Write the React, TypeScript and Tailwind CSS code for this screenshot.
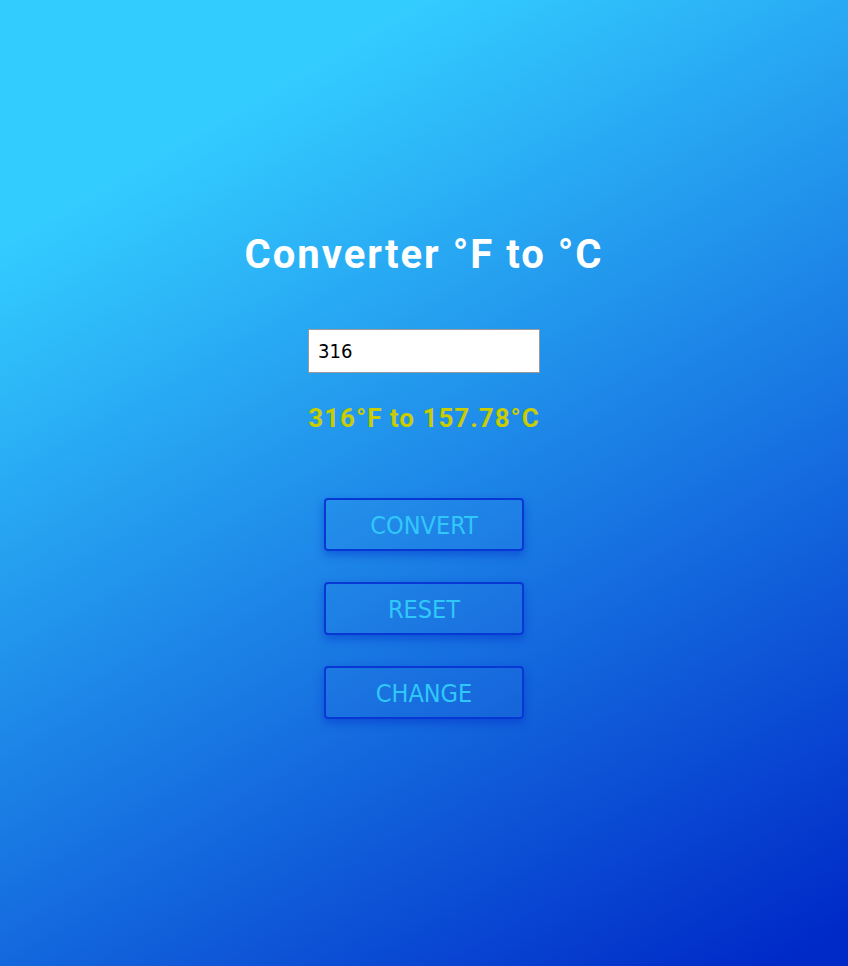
import { useState } from 'react';

const toCelsius = (f: number) => ((f - 32) * 5) / 9;

export default function App() {
    const [value, setValue] = useState('316');
    const [result, setResult] = useState('316°F to 157.78°C');

    const handleConvert = () => {
        const f = parseFloat(value);
        if (isNaN(f)) return;
        setResult(`${f}°F to ${toCelsius(f).toFixed(2)}°C`);
    };

    const handleReset = () => {
        setValue('');
        setResult('');
    };

    const buttons = [
        { label: 'CONVERT', onClick: handleConvert },
        { label: 'RESET', onClick: handleReset },
        { label: 'CHANGE', onClick: () => {} },
    ];

    return (
        <div className="min-h-screen w-full flex flex-col items-center pt-[231px] bg-[linear-gradient(150deg,#33ccff_17%,#002ac8_97%)]">
            <h1 className="text-[40px] leading-[48px] font-bold tracking-[2px] text-white font-['Roboto',sans-serif]">
                Converter °F to °C
            </h1>

            <input
                type="text"
                value={value}
                onChange={(e) => setValue(e.target.value)}
                className="mt-[50px] w-[232px] h-[44px] bg-white border border-[#9a9a9a] pl-[9px] text-[20px] text-black outline-none font-['DejaVu_Sans_Condensed','DejaVu_Sans',sans-serif]"
            />

            <p className="mt-[30px] h-[30px] text-[26px] leading-[30px] font-bold tracking-[1px] text-[#c9cc00] font-['Roboto',sans-serif]">
                {result}
            </p>

            <div className="mt-[65px] flex flex-col gap-[31px]">
                {buttons.map((b) => (
                    <button
                        key={b.label}
                        onClick={b.onClick}
                        className="w-[200px] h-[53px] pt-[2px] rounded-[4px] border-2 border-[#0838d4] bg-white/[0.02] shadow-[0_4px_10px_rgba(0,40,200,0.45)] text-[25px] text-[#30c8fa] font-['DejaVu_Sans_Condensed','DejaVu_Sans',sans-serif]"
                    >
                        {b.label}
                    </button>
                ))}
            </div>
        </div>
    );
}
